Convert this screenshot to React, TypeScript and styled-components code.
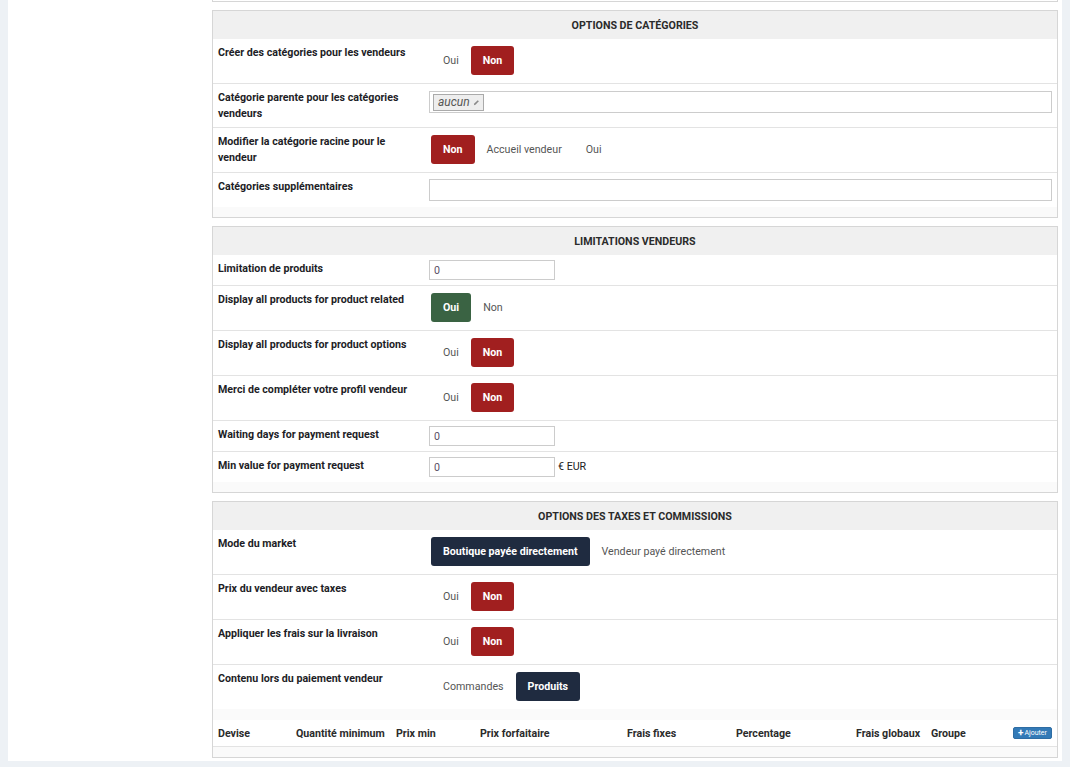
import styled, { createGlobalStyle } from 'styled-components';

const GlobalStyle = createGlobalStyle`
  html, body {
    margin: 0;
    padding: 0;
    background: #edf1f5;
    font-family: Roboto, "Liberation Sans", Arial, sans-serif;
  }
`;

const Page = styled.div`
  margin: 0 8px;
  background: #fff;
  padding: 0 4px 3px 204px;
`;

const PrevPanelEnd = styled.div`
  height: 1px;
  border: 1px solid #d6d6d6;
  border-top: none;
`;

const Panel = styled.section`
  margin-top: 8px;
  border: 1px solid #d6d6d6;
  background: #fafafa;
  padding-bottom: 10px;
`;

const PanelHeader = styled.div`
  height: 28px;
  line-height: 29px;
  background: #f0f0f0;
  text-align: center;
  font-size: 8pt;
  font-weight: 700;
  text-transform: uppercase;
  color: #2b2b2b;
`;

const RowList = styled.div``;

const Row = styled.div`
  display: grid;
  grid-template-columns: 211px 1fr;
  background: #fff;
  border-bottom: 1px solid #e3e3e3;

  &:last-child {
    border-bottom: none;
  }
`;

const Label = styled.div`
  padding: 6px 5px 5px;
  font-size: 8pt;
  line-height: 16px;
  font-weight: 700;
  color: #1d1d26;
`;

const Value = styled.div`
  padding: 5px;
  display: flex;
  align-items: flex-start;
`;

const ToggleGroup = styled.div`
  display: flex;
  margin: 2px 0 3px 2px;
`;

type Tone = 'red' | 'green' | 'navy';

const toneColor: Record<Tone, string> = {
  red: '#a11f1f',
  green: '#3a6343',
  navy: '#1f2b40',
};

const ToggleButton = styled.button<{ $active?: boolean; $tone?: Tone }>`
  height: 29px;
  padding: 0 12px;
  border: none;
  border-radius: 3px;
  font-family: inherit;
  font-size: 8pt;
  background: ${(p) => (p.$active ? toneColor[p.$tone || 'red'] : 'transparent')};
  color: ${(p) => (p.$active ? '#fff' : '#555')};
  font-weight: ${(p) => (p.$active ? 700 : 400)};
  cursor: pointer;
`;

const TextInput = styled.input<{ $wide?: boolean }>`
  box-sizing: border-box;
  width: ${(p) => (p.$wide ? '100%' : '126px')};
  height: ${(p) => (p.$wide ? '22px' : '20px')};
  margin: ${(p) => (p.$wide ? '1px 0' : '0')};
  border: 1px solid #cccccc;
  padding: 0 4px;
  font-family: inherit;
  font-size: 8pt;
  color: #5a4f66;
  outline: none;
`;

const TagField = styled.div`
  box-sizing: border-box;
  width: 100%;
  height: 22px;
  margin: 2px 0 0;
  border: 1px solid #cccccc;
  padding: 2px 3px;
  display: flex;
  align-items: center;
`;

const Tag = styled.span`
  box-sizing: border-box;
  height: 17px;
  display: inline-flex;
  align-items: center;
  gap: 3px;
  padding: 0 3px 0 4px;
  border: 1px solid #aaa;
  background: #eeeeee;
  font-size: 12px;
  font-style: italic;
  color: #555;
`;

const Suffix = styled.span`
  margin-left: 3px;
  line-height: 20px;
  font-size: 8pt;
  color: #222;
`;

const TableWrap = styled.div`
  padding-top: 11px;
`;

const TableHead = styled.div`
  display: grid;
  grid-template-columns: 78px 100px 84px 147px 109px 120px 75px 82px 1fr;
  align-items: center;
  height: 26px;
  background: #fff;
  border-bottom: 1px solid #e3e3e3;
`;

const Th = styled.div`
  padding: 0 5px;
  font-size: 8pt;
  font-weight: 700;
  color: #2b2b2b;
  white-space: nowrap;
`;

const AddButton = styled.button`
  box-sizing: border-box;
  width: 39px;
  height: 12px;
  padding: 0;
  border: 1px solid #2e6da4;
  border-radius: 2px;
  background: #337ab7;
  color: #fff;
  font-family: inherit;
  font-size: 7px;
  line-height: 10px;
  display: flex;
  align-items: center;
  justify-content: center;
  gap: 1px;

  b {
    font-size: 10px;
    font-weight: 700;
  }
`;

function PencilGlyph() {
  return (
    <svg width="7" height="7" viewBox="0 0 8 8">
      <path d="M1 7 L1.5 5.2 L5.4 1.3 L6.7 2.6 L2.8 6.5 Z" fill="#8a8a8a" />
    </svg>
  );
}

type Option = { label: string; active?: boolean; tone?: Tone };

function Toggle({ options }: { options: Option[] }) {
  return (
    <ToggleGroup>
      {options.map((o) => (
        <ToggleButton key={o.label} $active={o.active} $tone={o.tone}>
          {o.label}
        </ToggleButton>
      ))}
    </ToggleGroup>
  );
}

const yesNo: Option[] = [{ label: 'Oui' }, { label: 'Non', active: true, tone: 'red' }];

const columns = [
  'Devise',
  'Quantité minimum',
  'Prix min',
  'Prix forfaitaire',
  'Frais fixes',
  'Percentage',
  'Frais globaux',
  'Groupe',
];

export default function App() {
  return (
    <>
      <GlobalStyle />
      <Page>
        <PrevPanelEnd />

        <Panel>
          <PanelHeader>Options de catégories</PanelHeader>
          <RowList>
            <Row>
              <Label>Créer des catégories pour les vendeurs</Label>
              <Value>
                <Toggle options={yesNo} />
              </Value>
            </Row>
            <Row>
              <Label>Catégorie parente pour les catégories vendeurs</Label>
              <Value>
                <TagField>
                  <Tag>
                    aucun
                    <PencilGlyph />
                  </Tag>
                </TagField>
              </Value>
            </Row>
            <Row>
              <Label>Modifier la catégorie racine pour le vendeur</Label>
              <Value>
                <Toggle
                  options={[
                    { label: 'Non', active: true, tone: 'red' },
                    { label: 'Accueil vendeur' },
                    { label: 'Oui' },
                  ]}
                />
              </Value>
            </Row>
            <Row>
              <Label>Catégories supplémentaires</Label>
              <Value>
                <TextInput $wide defaultValue="" />
              </Value>
            </Row>
          </RowList>
        </Panel>

        <Panel>
          <PanelHeader>Limitations vendeurs</PanelHeader>
          <RowList>
            <Row>
              <Label>Limitation de produits</Label>
              <Value>
                <TextInput defaultValue="0" />
              </Value>
            </Row>
            <Row>
              <Label>Display all products for product related</Label>
              <Value>
                <Toggle
                  options={[{ label: 'Oui', active: true, tone: 'green' }, { label: 'Non' }]}
                />
              </Value>
            </Row>
            <Row>
              <Label>Display all products for product options</Label>
              <Value>
                <Toggle options={yesNo} />
              </Value>
            </Row>
            <Row>
              <Label>Merci de compléter votre profil vendeur</Label>
              <Value>
                <Toggle options={yesNo} />
              </Value>
            </Row>
            <Row>
              <Label>Waiting days for payment request</Label>
              <Value>
                <TextInput defaultValue="0" />
              </Value>
            </Row>
            <Row>
              <Label>Min value for payment request</Label>
              <Value>
                <TextInput defaultValue="0" />
                <Suffix>€ EUR</Suffix>
              </Value>
            </Row>
          </RowList>
        </Panel>

        <Panel>
          <PanelHeader>Options des taxes et commissions</PanelHeader>
          <RowList>
            <Row>
              <Label>Mode du market</Label>
              <Value>
                <Toggle
                  options={[
                    { label: 'Boutique payée directement', active: true, tone: 'navy' },
                    { label: 'Vendeur payé directement' },
                  ]}
                />
              </Value>
            </Row>
            <Row>
              <Label>Prix du vendeur avec taxes</Label>
              <Value>
                <Toggle options={yesNo} />
              </Value>
            </Row>
            <Row>
              <Label>Appliquer les frais sur la livraison</Label>
              <Value>
                <Toggle options={yesNo} />
              </Value>
            </Row>
            <Row>
              <Label>Contenu lors du paiement vendeur</Label>
              <Value>
                <Toggle
                  options={[
                    { label: 'Commandes' },
                    { label: 'Produits', active: true, tone: 'navy' },
                  ]}
                />
              </Value>
            </Row>
          </RowList>
          <TableWrap>
            <TableHead>
              {columns.map((c) => (
                <Th key={c}>{c}</Th>
              ))}
              <Th>
                <AddButton>
                  <b>+</b>Ajouter
                </AddButton>
              </Th>
            </TableHead>
          </TableWrap>
        </Panel>
      </Page>
    </>
  );
}
